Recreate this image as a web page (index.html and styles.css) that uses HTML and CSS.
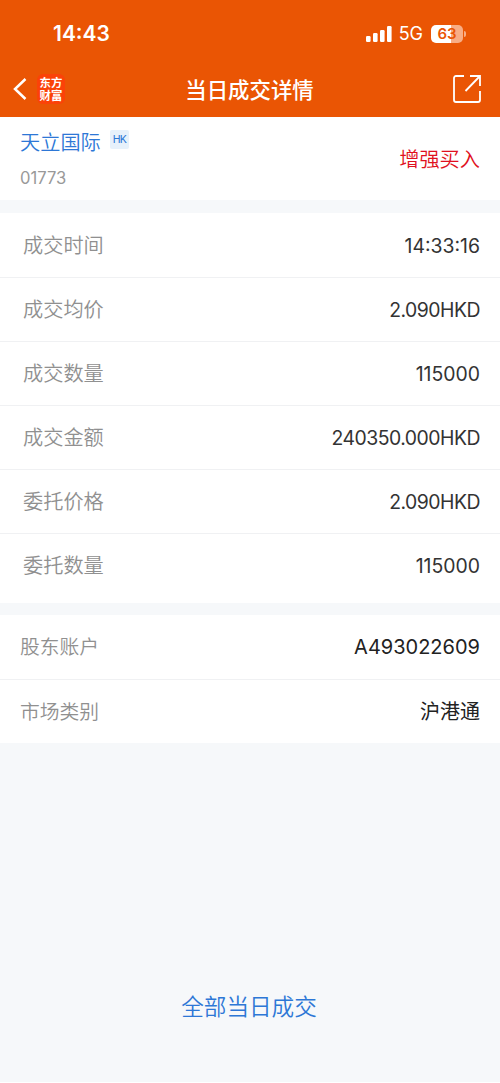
FILE: index.html
```html
<!DOCTYPE html>
<html lang="zh-CN">
<head>
    <meta charset="UTF-8">
    <meta name="viewport" content="width=device-width, initial-scale=1.0">
    <title>当日成交详情</title>
    <link rel="stylesheet" href="styles.css">
</head>
<body>
    <div class="page">
        <header class="header">
            <div class="status-bar">
                <span class="clock">14:43</span>
                <div class="status-icons">
                    <svg class="signal" width="26" height="16" viewBox="0 0 26 16" fill="#fff">
                        <rect x="0" y="10" width="4.6" height="6" rx="1.2"/>
                        <rect x="7" y="7" width="4.6" height="9" rx="1.2"/>
                        <rect x="14" y="4" width="4.6" height="12" rx="1.2"/>
                        <rect x="21" y="0" width="4.6" height="16" rx="1.2"/>
                    </svg>
                    <span class="network">5G</span>
                    <div class="battery">63</div>
                    <span class="battery-cap"></span>
                </div>
            </div>
            <div class="nav">
                <svg class="back" width="14" height="22" viewBox="0 0 14 22" fill="none" stroke="#fff" stroke-width="2.5">
                    <path d="M12.5 1L2 11l10.5 10"/>
                </svg>
                <div class="logo">东方<br>财富</div>
                <h1 class="title">当日成交详情</h1>
                <svg class="share" width="28" height="28" viewBox="0 0 28 28" fill="none" stroke="#fff" stroke-width="1.8">
                    <path d="M11 1H3a2 2 0 0 0-2 2v22a2 2 0 0 0 2 2h22a2 2 0 0 0 2-2V16"/>
                    <path d="M17 1h10v10M27 1L12.5 16"/>
                </svg>
            </div>
        </header>

        <section class="stock">
            <div class="stock-info">
                <div class="stock-name">天立国际<span class="tag">HK</span></div>
                <div class="stock-code">01773</div>
            </div>
            <div class="direction">增强买入</div>
        </section>

        <section class="list">
            <div class="row"><span class="label">成交时间</span><span class="value">14:33:16</span></div>
            <div class="row"><span class="label">成交均价</span><span class="value money">2.090HKD</span></div>
            <div class="row"><span class="label">成交数量</span><span class="value">115000</span></div>
            <div class="row"><span class="label">成交金额</span><span class="value money">240350.000HKD</span></div>
            <div class="row"><span class="label">委托价格</span><span class="value money">2.090HKD</span></div>
            <div class="row"><span class="label">委托数量</span><span class="value">115000</span></div>
        </section>

        <section class="list account">
            <div class="row"><span class="label">股东账户</span><span class="value">A493022609</span></div>
            <div class="row"><span class="label">市场类别</span><span class="value">沪港通</span></div>
        </section>

        <a class="all-deals">全部当日成交</a>
    </div>
</body>
</html>
```
FILE: styles.css
```css
body {
    font-family: Inter, "Noto Sans CJK SC", sans-serif;
    background-color: #fff;
    margin: 0;
    padding: 0;
}

.page {
    display: flex;
    flex-direction: column;
    height: 1082px;
    background-color: #f6f8fa;
}

.header {
    height: 117px;
    background-color: #ea5504;
    color: #fff;
}

.status-bar {
    display: flex;
    justify-content: space-between;
    align-items: center;
    height: 68px;
    padding: 0 34px 0 53px;
    box-sizing: border-box;
}

.clock {
    font-size: 21px;
    font-weight: 600;
    line-height: 24px;
}

.status-icons {
    display: flex;
    align-items: center;
}

.network {
    margin-left: 7px;
    font-size: 18px;
    line-height: 20px;
}

.battery {
    width: 32px;
    height: 18px;
    margin-left: 8px;
    border-radius: 5px;
    background: linear-gradient(90deg, #fff 63%, #f8ad85 63%);
    color: #ea5504;
    font-size: 15px;
    font-weight: 600;
    line-height: 18px;
    text-align: center;
}

.battery-cap {
    width: 2px;
    height: 6px;
    margin-left: 1px;
    border-radius: 0 2px 2px 0;
    background-color: #f8ad85;
}

.nav {
    display: flex;
    align-items: center;
    height: 43px;
    padding: 0 19px 0 13px;
}

.back {
    margin-top: -2px;
}

.logo {
    width: 28px;
    height: 30px;
    margin: -2px 0 0 10px;
    border-radius: 6px;
    background-color: #fb4208;
    font-size: 11.4px;
    font-weight: 700;
    line-height: 13px;
    text-align: center;
    padding-top: 3px;
    box-sizing: border-box;
}

.title {
    flex: 1;
    margin: 0 19px 0 0;
    font-size: 21.4px;
    font-weight: 500;
    line-height: 30px;
    text-align: center;
}

.share {
    margin-top: -1px;
}

.stock {
    display: flex;
    justify-content: space-between;
    height: 83px;
    padding: 0 20px;
    background-color: #fff;
}

.stock-name {
    display: flex;
    align-items: center;
    height: 30px;
    margin-top: 9px;
    color: #2d77d6;
    font-size: 20.2px;
    font-weight: 350;
}

.tag {
    width: 19px;
    height: 19px;
    margin: -3px 0 0 9px;
    border-radius: 2px;
    background-color: #e7f1fb;
    font-family: Roboto, sans-serif;
    font-size: 11px;
    font-weight: 400;
    letter-spacing: -0.8px;
    line-height: 20px;
    text-align: center;
}

.stock-code {
    margin-top: 11px;
    color: #999;
    font-size: 16.6px;
    line-height: 22px;
}

.direction {
    align-self: center;
    color: #e01020;
    font-size: 20.2px;
    font-weight: 350;
}

.list {
    margin-top: 13px;
    padding-bottom: 6px;
    background-color: #fff;
}

.row {
    display: flex;
    justify-content: space-between;
    align-items: center;
    height: 64px;
    padding: 0 20px 0 23px;
    border-bottom: 1px solid #f0f1f3;
    box-sizing: border-box;
    font-size: 20.2px;
    line-height: 28px;
}

.row:first-child {
    height: 65px;
    padding-top: 1px;
}

.row:last-child {
    height: 63px;
    border-bottom: none;
}

.label {
    color: #909090;
    font-weight: 350;
}

.value {
    color: #333;
    font-size: 19.4px;
}

.money {
    letter-spacing: -0.5px;
}

.account {
    margin-top: 12px;
    padding-bottom: 0;
}

.account .row {
    padding-top: 0;
    padding-left: 20px;
}

.account .label {
    font-size: 19.8px;
}

.account .value {
    color: #222;
    font-size: 20px;
}

.all-deals {
    margin: 247px 2px 0 0;
    color: #2d77d6;
    font-size: 22.6px;
    font-weight: 350;
    line-height: 34px;
    text-align: center;
}
```
